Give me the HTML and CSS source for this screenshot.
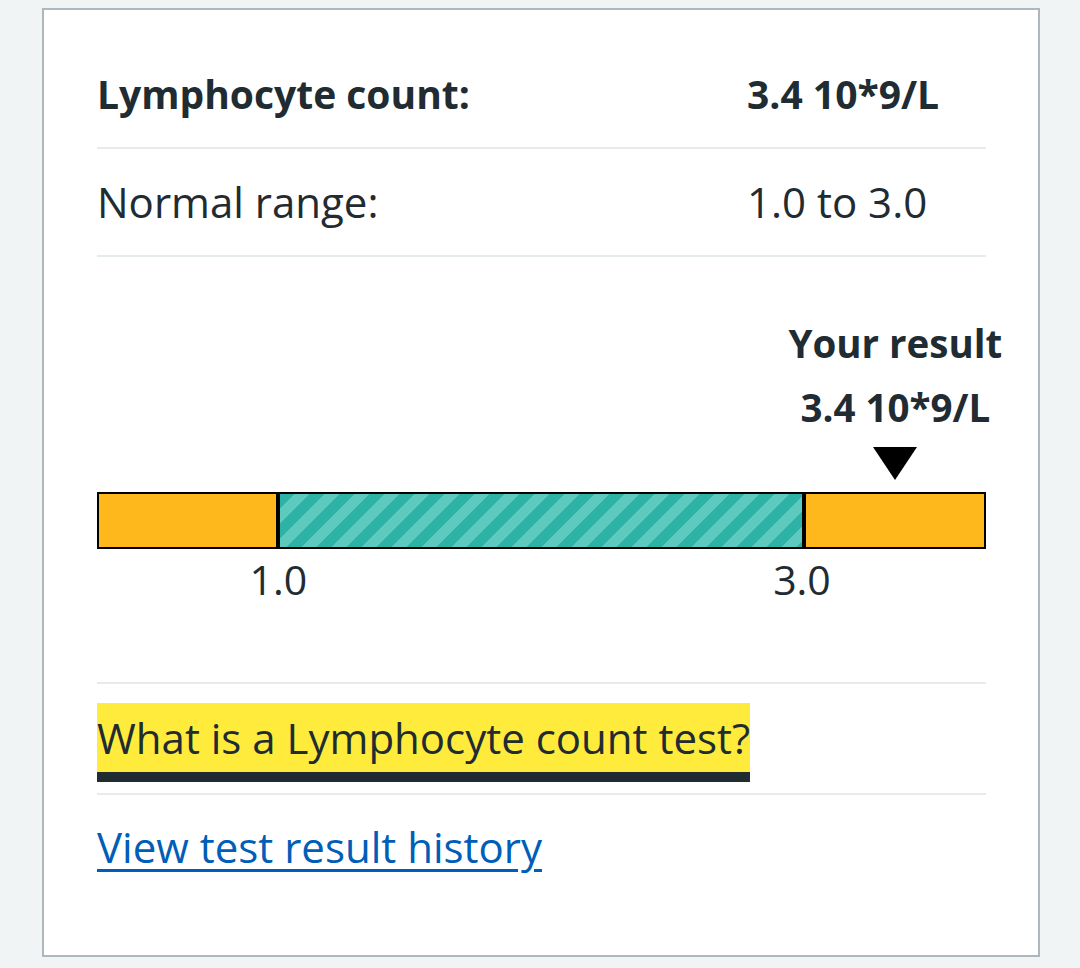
FILE: index.html
```html
<!DOCTYPE html>
<html lang="en">
<head>
<meta charset="utf-8">
<title>Lymphocyte count</title>
<link rel="stylesheet" href="styles.css">
</head>
<body>
<main class="card">
  <dl class="summary">
    <div class="row">
      <dt class="label strong">Lymphocyte count:</dt>
      <dd class="value strong">3.4 10*9/L</dd>
    </div>
    <div class="row">
      <dt class="label">Normal range:</dt>
      <dd class="value">1.0 to 3.0</dd>
    </div>
  </dl>

  <section class="chart">
    <div class="marker" style="margin-left: 89.8%;">
      <div class="marker-inner">
        <p class="marker-text">Your result<br>3.4 10*9/L</p>
        <svg class="marker-arrow" width="44" height="33" viewBox="0 0 44 33" aria-hidden="true"><polygon points="0,0 44,0 22,33" fill="#000"/></svg>
      </div>
    </div>
    <div class="bar">
      <div class="seg seg-out" style="width: 177px;"></div>
      <div class="seg seg-in"></div>
      <div class="seg seg-out" style="width: 178px;"></div>
    </div>
    <div class="ticks">
      <span class="tick" style="left: 20.4%;">1.0</span>
      <span class="tick" style="left: 79.3%;">3.0</span>
    </div>
  </section>

  <div class="links">
    <div class="link-row focus-row">
      <a class="link focused" href="#">What is a Lymphocyte count test?</a>
    </div>
    <div class="link-row">
      <a class="link" href="#">View test result history</a>
    </div>
  </div>
</main>
</body>
</html>
```
FILE: styles.css
```css
* { box-sizing: border-box; }

html, body {
  margin: 0;
  background: #f0f4f5;
}

body {
  padding: 8px 40px 11px 42px;
  font-family: "Open Sans", "Noto Sans", sans-serif;
  color: #212b32;
  font-size: 42px;
}

.card {
  background: #fff;
  border: 2px solid #aeb7bd;
  height: 949px;
  padding: 31px 52px 0 53px;
}

.summary {
  margin: 0;
}

.row {
  display: grid;
  grid-template-columns: 650px 1fr;
  padding: 29px 0;
  line-height: 48px;
  border-bottom: 2px solid #e6ebec;
}

.label, .value {
  margin: 0;
}

.strong {
  font-weight: 700;
  font-size: 39px;
}

.chart {
  padding: 54px 0 79px;
  border-bottom: 2px solid #e6ebec;
}

.marker {
  width: 0;
  display: flex;
  justify-content: center;
}

.marker-inner {
  display: flex;
  flex-direction: column;
  align-items: center;
  flex: none;
}

.marker-text {
  margin: 0;
  font-weight: 700;
  font-size: 38.5px;
  line-height: 64px;
  text-align: center;
  white-space: nowrap;
}

.marker-arrow {
  display: block;
  margin-top: 8px;
}

.bar {
  display: flex;
  height: 57px;
  margin-top: 12px;
  border: 2px solid #000;
}

.seg {
  height: 100%;
}

.seg-out {
  background: #ffb81c;
  flex: none;
}

.seg-in {
  flex: 1;
  border-left: 4px solid #000;
  border-right: 4px solid #000;
  background: repeating-linear-gradient(135deg, #2db3a6 0 10.6px, #5ccabe 10.6px 21.2px);
}

.ticks {
  position: relative;
  height: 48px;
  margin-top: 6px;
  line-height: 48px;
  font-size: 41px;
}

.tick {
  position: absolute;
  top: 0;
  transform: translateX(-50%);
}

.link-row {
  border-bottom: 2px solid #e6ebec;
}

.focus-row {
  padding: 19px 0 21px;
}

.link-row:last-child {
  border-bottom: 0;
  padding-top: 20px;
}

.link {
  color: #005eb8;
  line-height: 64px;
  text-decoration: underline;
  text-decoration-thickness: 3px;
  text-underline-offset: 6px;
}

.link.focused {
  display: inline-block;
  line-height: 69px;
  height: 69px;
  color: #212b32;
  background: #ffeb3b;
  text-decoration: none;
  box-shadow: 0 10px 0 #212b32;
}
```
